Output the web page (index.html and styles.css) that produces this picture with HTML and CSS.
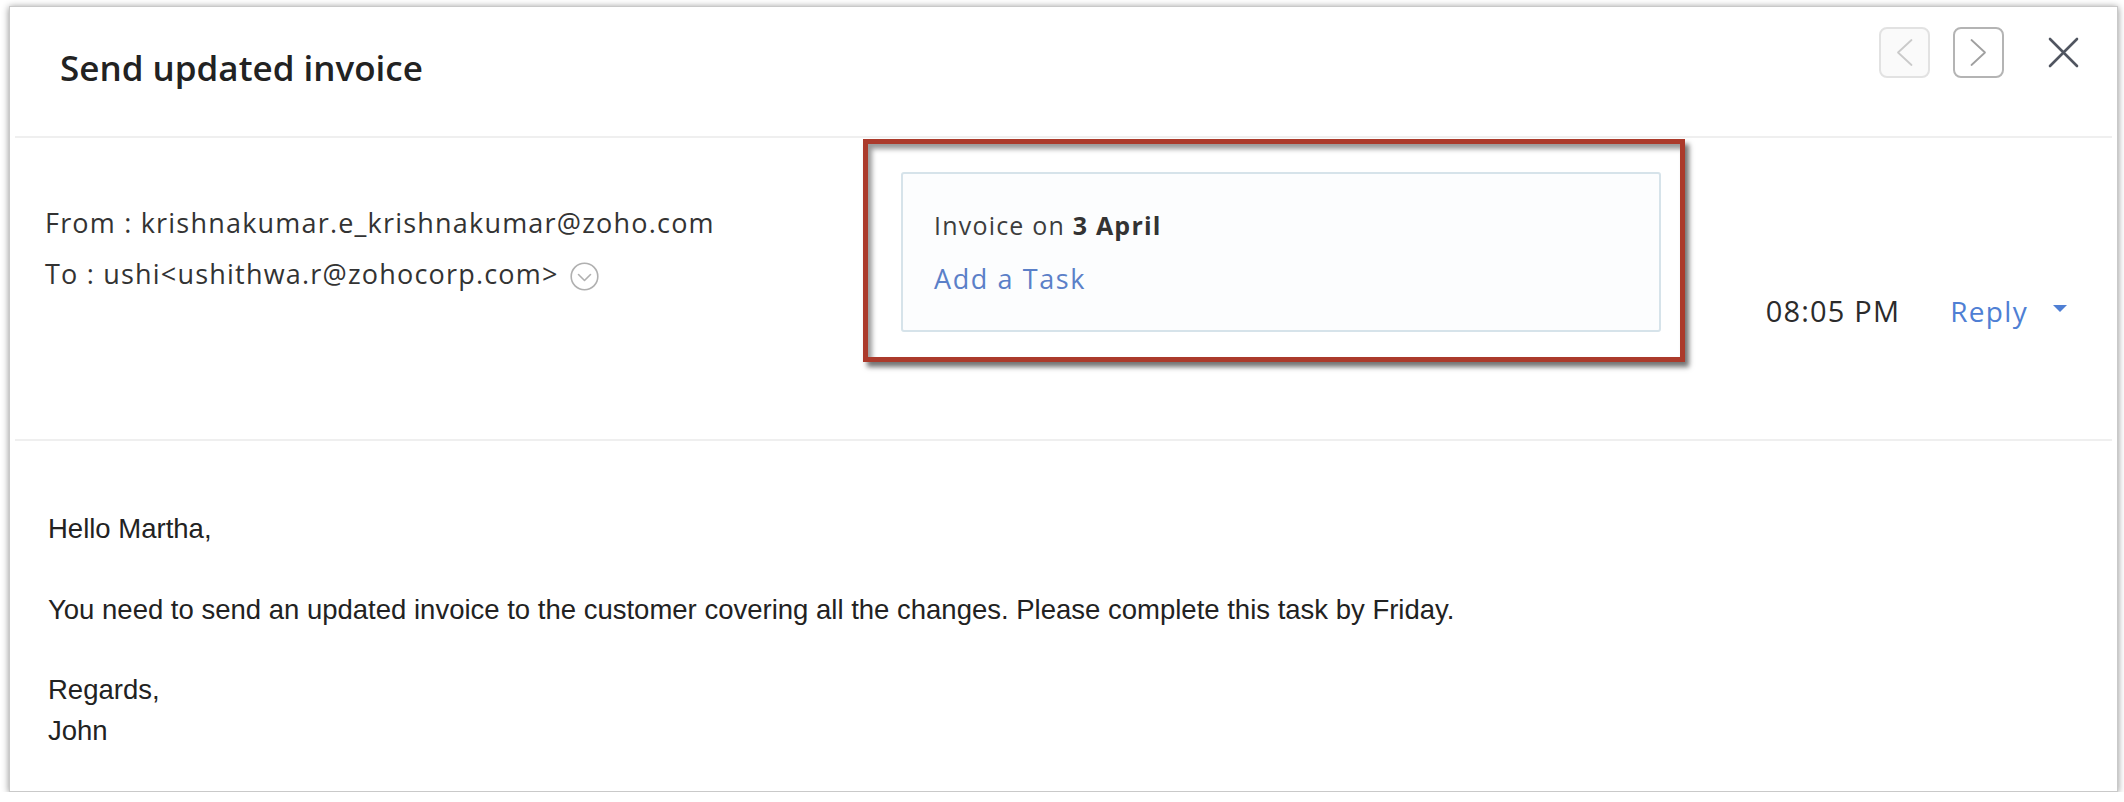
FILE: index.html
```html
<!DOCTYPE html>
<html lang="en">
<head>
<meta charset="utf-8">
<title>Send updated invoice</title>
<link rel="stylesheet" href="styles.css">
</head>
<body>
<div class="card">
  <header class="head">
    <h1 class="title">Send updated invoice</h1>
    <div class="nav">
      <button class="nav-btn is-disabled" aria-label="Previous">
        <svg width="47" height="47" viewBox="0 0 47 47"><polyline points="30.5,11 17,23.5 30.5,36" /></svg>
      </button>
      <button class="nav-btn" aria-label="Next">
        <svg width="47" height="47" viewBox="0 0 47 47"><polyline points="16.5,11 30,23.5 16.5,36" /></svg>
      </button>
      <button class="close" aria-label="Close">
        <svg width="31" height="31" viewBox="0 0 31 31"><path d="M2 2 L29 29 M29 2 L2 29" /></svg>
      </button>
    </div>
  </header>

  <section class="meta">
    <div class="addr">
      <div class="addr-line">From : krishnakumar.e_krishnakumar@zoho.com</div>
      <div class="addr-line">To : ushi&lt;ushithwa.r@zohocorp.com&gt;<svg class="expand" width="29" height="29" viewBox="0 0 29 29"><circle cx="14.5" cy="14.5" r="13.3" /><polyline points="8.5,12.5 14.5,18.5 20.5,12.5" /></svg></div>
    </div>

    <div class="task">
      <div class="task-date">Invoice on <b>3 April</b></div>
      <a class="task-add" href="#">Add a Task</a>
    </div>

    <div class="actions">
      <span class="time">08:05 PM</span><a class="reply" href="#">Reply</a><span class="caret"></span>
    </div>
  </section>

  <section class="mail-body">
    <p>Hello Martha,</p>
    <p>You need to send an updated invoice to the customer covering all the changes. Please complete this task by Friday.</p>
    <p>Regards,<br>John</p>
  </section>
</div>
</body>
</html>
```

FILE: styles.css
```css
* { box-sizing: border-box; }

html, body {
  margin: 0;
  background: #ffffff;
}

body {
  font-family: "Open Sans", "Lato", sans-serif;
  color: #333333;
}

.card {
  margin: 6px 6px 0 9px;
  height: 786px;
  background: #ffffff;
  border: 1px solid #c9c9c9;
  box-shadow: 0 1px 7px rgba(0, 0, 0, 0.45);
  display: flex;
  flex-direction: column;
}

/* ---------- header ---------- */
.head {
  margin: 0 5px;
  height: 132px;
  border-bottom: 2px solid #efefef;
  display: flex;
  justify-content: space-between;
  align-items: flex-start;
  padding: 20px 33px 0 45px;
}

.title {
  margin: 19px 0 0;
  font-family: "Open Sans", sans-serif;
  font-size: 35px;
  font-weight: 600;
  line-height: 44px;
  color: #222222;
}

.nav {
  display: flex;
  align-items: center;
}

.nav-btn {
  width: 51px;
  height: 51px;
  padding: 0;
  border: 2px solid #b4b4b4;
  border-radius: 8px;
  background: #ffffff;
  display: flex;
  align-items: center;
  justify-content: center;
  cursor: pointer;
}

.nav-btn + .nav-btn { margin-left: 23px; }

.nav-btn svg polyline {
  fill: none;
  stroke: #a0a0a0;
  stroke-width: 1.8;
  stroke-linecap: round;
  stroke-linejoin: round;
}

.nav-btn.is-disabled {
  border-color: #e2e2e2;
  background: #fafafa;
}

.nav-btn.is-disabled svg polyline { stroke: #cacaca; }

.close {
  margin-left: 44px;
  width: 31px;
  height: 51px;
  padding: 0;
  border: 0;
  background: transparent;
  display: flex;
  align-items: center;
  justify-content: center;
  cursor: pointer;
}

.close svg path {
  stroke: #505560;
  stroke-width: 2.6;
  stroke-linecap: round;
}

/* ---------- meta row ---------- */
.meta {
  margin: 0 5px;
  height: 304px;
  border-bottom: 2px solid #efefef;
  display: grid;
  grid-template-columns: 856px 760px 1fr;
  grid-template-rows: 160px;
  padding: 34px 45px 0 30px;
  align-items: start;
}

.addr {
  margin-top: 25px;
  font-size: 27px;
  letter-spacing: 1.2px;
  line-height: 51px;
  color: #333333;
}

.addr-line { white-space: nowrap; }

.expand {
  margin-left: 11px;
  vertical-align: -6.5px;
}

.expand circle,
.expand polyline {
  fill: none;
  stroke: #b0b0b0;
  stroke-width: 1.6;
  stroke-linecap: round;
  stroke-linejoin: round;
}

.task {
  position: relative;
  height: 160px;
  border: 2px solid #d6e3ea;
  border-radius: 3px;
  background: #fcfdfe;
  padding: 36px 31px 0;
}

/* review annotation drawn over the task card */
.task::after {
  content: "";
  position: absolute;
  top: -35px;
  left: -40px;
  right: -26px;
  bottom: -32px;
  border: 5px solid #ab3a2b;
  box-shadow: 4px 5px 5px rgba(0, 0, 0, 0.55), inset 4px 5px 5px rgba(0, 0, 0, 0.4);
  pointer-events: none;
}

.task-date {
  font-size: 25px;
  letter-spacing: 1.2px;
  line-height: 30px;
  color: #3d3d3d;
}

.task-date b { font-weight: 700; color: #333333; }

.task-add {
  display: inline-block;
  margin-top: 24px;
  font-size: 27px;
  letter-spacing: 1.6px;
  line-height: 30px;
  color: #5b80c8;
  text-decoration: none;
}

.actions {
  align-self: end;
  justify-self: end;
  margin-bottom: -1px;
  white-space: nowrap;
  line-height: 34px;
}

.time {
  font-size: 29px;
  letter-spacing: 1.2px;
  color: #2b2b2b;
  margin-right: 50px;
}

.reply {
  font-size: 28px;
  letter-spacing: 1.3px;
  color: #4f7fd4;
  text-decoration: none;
  margin-right: 25px;
}

.caret {
  display: inline-block;
  width: 0;
  height: 0;
  border-left: 7px solid transparent;
  border-right: 7px solid transparent;
  border-top: 7px solid #4f7fd4;
  margin-bottom: 10px;
}

/* ---------- body ---------- */
.mail-body {
  padding: 68px 0 0 38px;
  font-family: "Liberation Sans", "Arial", sans-serif;
  font-size: 27.5px;
  line-height: 40.25px;
  color: #222222;
}

.mail-body p { margin: 0 0 40.25px; }
```
